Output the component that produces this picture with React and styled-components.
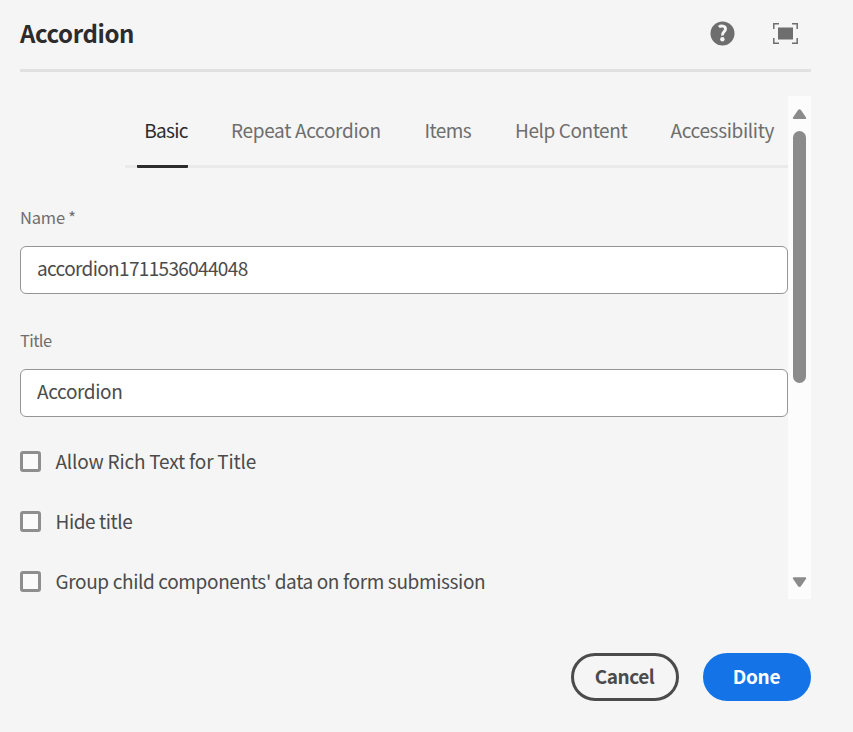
import React from 'react';
import styled, { createGlobalStyle } from 'styled-components';

const GlobalStyle = createGlobalStyle`
  *, *::before, *::after { box-sizing: border-box; }
  body {
    margin: 0;
    background: #f5f5f5;
    font-family: "Noto Sans CJK SC", "Noto Sans", sans-serif;
    overflow: hidden;
  }
`;

const Dialog = styled.main`
  width: 853px;
  height: 732px;
  padding: 0 42px 0 20px;
  background: #f5f5f5;
  display: flex;
  flex-direction: column;
`;

const Header = styled.header`
  height: 72px;
  flex: none;
  display: flex;
  align-items: center;
  justify-content: space-between;
  padding-bottom: 2px;
  border-bottom: 3px solid #e1e1e1;
`;

const Heading = styled.h1`
  margin: 0;
  padding-bottom: 1px;
  font-size: 24px;
  line-height: 36px;
  font-weight: 700;
  letter-spacing: -0.4px;
  color: #2c2c2c;
`;

const HeaderActions = styled.div`
  display: flex;
  align-items: center;
  gap: 38px;
  padding-right: 13px;
  color: #6e6e6e;
`;

const IconButton = styled.button`
  border: 0;
  padding: 0;
  background: none;
  color: inherit;
  display: flex;
`;

const Body = styled.section`
  margin-top: 24px;
  height: 503px;
  flex: none;
  display: flex;
  overflow: hidden;
`;

const Content = styled.div`
  width: 768px;
`;

const TabList = styled.nav`
  height: 72px;
  margin-left: 105px;
  padding-left: 12px;
  border-bottom: 3px solid #eaeaea;
  display: grid;
  grid-template-columns: 87px 193.5px 90.5px 155.5px auto;
`;

const Tab = styled.button`
  justify-self: start;
  height: 72px;
  border: 0;
  border-bottom: 3px solid ${(p) => (p.$active ? '#2c2c2c' : 'transparent')};
  border-radius: 1px;
  padding: 0 0 2px 7px;
  background: none;
  font: inherit;
  font-size: 19px;
  line-height: 67px;
  white-space: nowrap;
  letter-spacing: ${(p) => p.$tracking}px;
  color: ${(p) => (p.$active ? '#2c2c2c' : '#6e6e6e')};
  width: ${(p) => (p.$active ? '51px' : 'auto')};
`;

const Field = styled.label`
  display: block;
  height: 94px;
  margin-top: ${(p) => p.$gap}px;
`;

const FieldLabel = styled.span`
  display: block;
  height: 46px;
  font-size: 16.5px;
  line-height: 34px;
  letter-spacing: ${(p) => p.$tracking}px;
  color: #6e6e6e;
`;

const TextInput = styled.input`
  display: block;
  width: 768px;
  height: 48px;
  padding: 0 16px 5px;
  border: 1px solid #959595;
  border-radius: 6px;
  background: #fff;
  color: #4b4b4b;
  font: inherit;
  font-size: 19px;
  letter-spacing: ${(p) => p.$tracking}px;
  outline: 0;
`;

const CheckList = styled.div`
  margin-top: 14px;
`;

const CheckRow = styled.label`
  height: 60px;
  display: flex;
  align-items: center;
  gap: 14.5px;
  font-size: 19px;
  line-height: 28px;
  white-space: nowrap;
  letter-spacing: ${(p) => p.$tracking}px;
  color: #4b4b4b;
`;

const Checkbox = styled.input.attrs({ type: 'checkbox' })`
  appearance: none;
  flex: none;
  width: 21px;
  height: 21px;
  margin: 0;
  border: 3px solid #8e8e8e;
  border-radius: 3px;
  background: #fafafa;
`;

const Scrollbar = styled.div`
  width: 23px;
  background: #fcfcfc;
  display: flex;
  flex-direction: column;
  align-items: center;
  justify-content: space-between;
  padding: 12px 0 11px;
`;

const Thumb = styled.div`
  width: 13px;
  height: 252px;
  margin: 11px 0 auto;
  border-radius: 7px;
  background: #8b8b8b;
`;

const Footer = styled.footer`
  margin-top: 54px;
  display: flex;
  justify-content: flex-end;
  gap: 24px;
`;

const ActionButton = styled.button`
  width: 108px;
  height: 48px;
  border: 3px solid ${(p) => (p.$primary ? '#1473e6' : '#4b4b4b')};
  border-radius: 24px;
  padding: 0 1px 3px 0;
  background: ${(p) => (p.$primary ? '#1473e6' : 'transparent')};
  color: ${(p) => (p.$primary ? '#fff' : '#4b4b4b')};
  font: inherit;
  font-size: 19px;
  line-height: 28px;
  font-weight: 700;
  letter-spacing: ${(p) => p.$tracking}px;
`;

const HelpIcon = () => (
  <svg width="25" height="25" viewBox="0 0 25 25">
    <circle cx="12.5" cy="12.5" r="12" fill="currentColor" />
    <path d="M8.9 6C10.6 4.6 15.5 4.4 15.5 7.9c0 2.9-3.6 3.3-3 6.7" fill="none" stroke="#f5f5f5" strokeWidth="2.9" />
    <circle cx="12.4" cy="18.2" r="2.2" fill="#f5f5f5" />
  </svg>
);

const FullscreenIcon = () => (
  <svg width="25" height="21" viewBox="0 0 25 21">
    <rect x="5" y="4.5" width="15" height="12" fill="currentColor" />
    <path d="M.8 6V.8H6M19 .8h5.2V6M24.2 15v5.2H19M6 20.2H.8V15" fill="none" stroke="currentColor" strokeWidth="1.5" />
  </svg>
);

const ArrowIcon = ({ down }) => (
  <svg width="15" height="12" viewBox="0 0 15 12">
    <path
      d={down ? 'M1.7 2.2h11.6L8.2 9.7Q7.5 10.5 6.8 9.7Z' : 'M1.7 10h11.6L8.2 2.5Q7.5 1.7 6.8 2.5Z'}
      fill="#8b8b8b"
      stroke="#8b8b8b"
      strokeWidth="1.8"
      strokeLinejoin="round"
    />
  </svg>
);

const tabs = [
  { label: 'Basic', tracking: -0.65, active: true },
  { label: 'Repeat Accordion', tracking: -0.33 },
  { label: 'Items', tracking: -0.6 },
  { label: 'Help Content', tracking: -0.42 },
  { label: 'Accessibility', tracking: -0.36 },
];

const options = [
  { label: 'Allow Rich Text for Title', tracking: -0.2 },
  { label: 'Hide title', tracking: -0.43 },
  { label: "Group child components' data on form submission", tracking: -0.365 },
];

export default function App() {
  return (
    <>
      <GlobalStyle />
      <Dialog>
        <Header>
          <Heading>Accordion</Heading>
          <HeaderActions>
            <IconButton aria-label="Help"><HelpIcon /></IconButton>
            <IconButton aria-label="Toggle fullscreen"><FullscreenIcon /></IconButton>
          </HeaderActions>
        </Header>
        <Body>
          <Content>
            <TabList>
              {tabs.map((t) => (
                <Tab key={t.label} $active={t.active} $tracking={t.tracking}>{t.label}</Tab>
              ))}
            </TabList>
            <Field $gap={32}>
              <FieldLabel $tracking={-0.2}>Name *</FieldLabel>
              <TextInput $tracking={-0.66} defaultValue="accordion1711536044048" />
            </Field>
            <Field $gap={29}>
              <FieldLabel $tracking={-0.6}>Title</FieldLabel>
              <TextInput $tracking={-0.38} defaultValue="Accordion" />
            </Field>
            <CheckList>
              {options.map((o) => (
                <CheckRow key={o.label} $tracking={o.tracking}>
                  <Checkbox />
                  {o.label}
                </CheckRow>
              ))}
            </CheckList>
          </Content>
          <Scrollbar>
            <ArrowIcon />
            <Thumb />
            <ArrowIcon down />
          </Scrollbar>
        </Body>
        <Footer>
          <ActionButton $tracking={-0.5}>Cancel</ActionButton>
          <ActionButton $primary $tracking={-0.25}>Done</ActionButton>
        </Footer>
      </Dialog>
    </>
  );
}
